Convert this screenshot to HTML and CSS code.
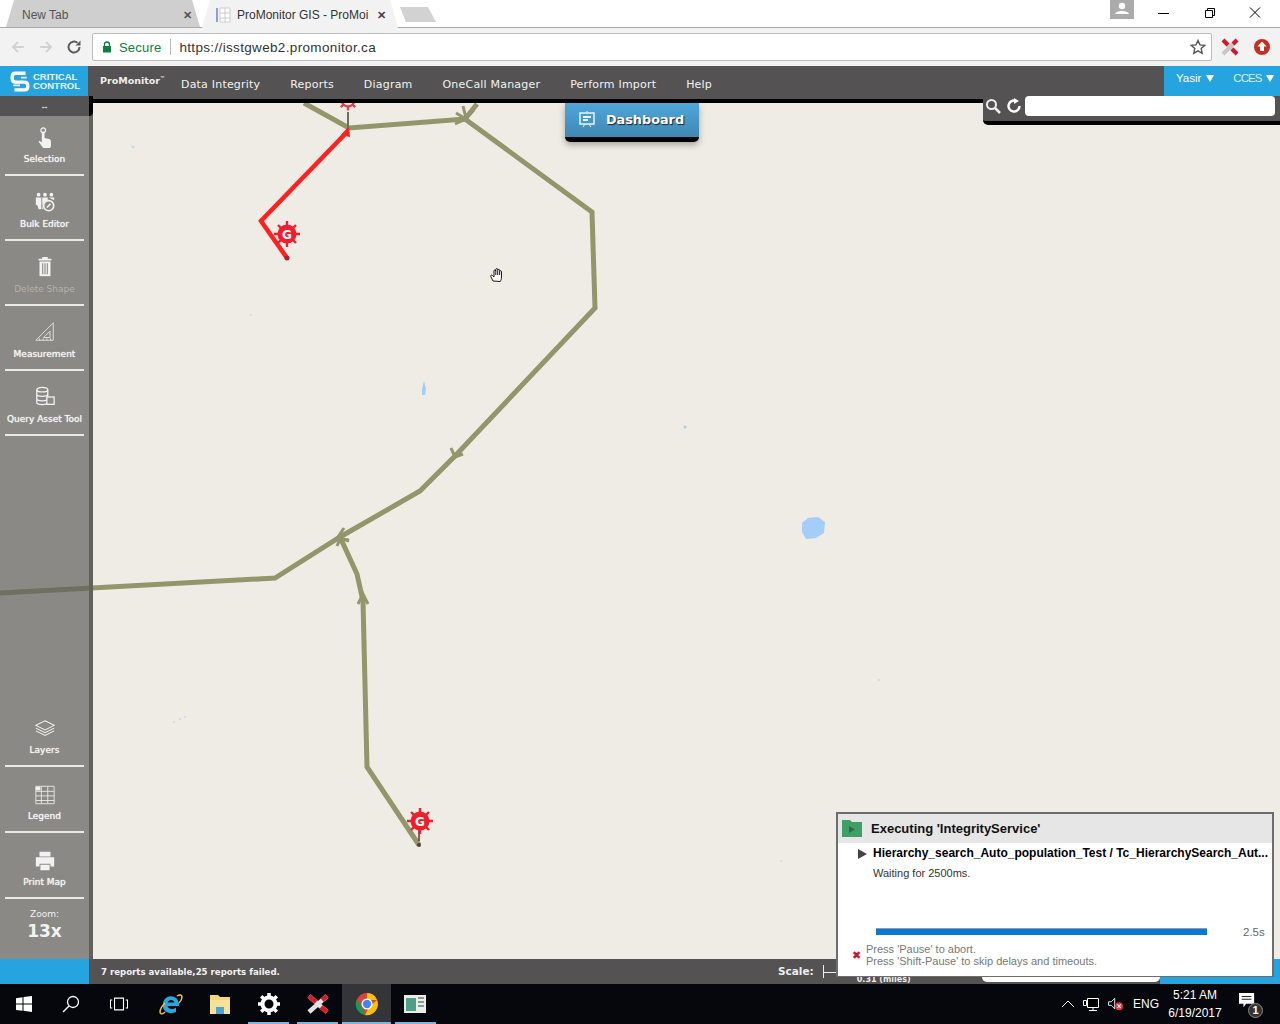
FILE: index.html
```html
<!DOCTYPE html>
<html lang="en">
<head>
<meta charset="utf-8">
<title>ProMonitor GIS</title>
<link rel="stylesheet" href="styles.css">
</head>
<body>
<div class="screen">
  <header class="tabstrip">
    <div class="tab tab-off"><span class="tab-title">New Tab</span><span class="tab-x">✕</span></div>
    <div class="tab tab-on">
      <svg class="favicon" viewBox="0 0 16 16"><rect x="0" y="1" width="2" height="14" fill="#7aa7d6"/><path d="M4 1h10v14H4zM4 6h10M4 11h10M9 1v14" fill="#fff" stroke="#ccc"/></svg>
      <span class="tab-title tab-title-on">ProMonitor GIS - ProMoi</span><span class="tab-x tab-x-on">✕</span>
    </div>
    <div class="tab-new"></div>
    <div class="strip-fill"></div>
    <div class="profile"><svg viewBox="0 0 24 19" class="profile-ico"><circle cx="12" cy="6" r="3.2" fill="#fff"/><path d="M5 14c1-4 13-4 14 0z" fill="#fff"/></svg></div>
    <div class="winbtns">
      <svg class="winbtn" viewBox="0 0 46 27"><path d="M18 13.500h11" stroke="#000" stroke-width="1"/></svg>
      <svg class="winbtn" viewBox="0 0 46 27"><path d="M19.500 10.500h7v7h-7zM21.500 10.500v-2h7v7h-2" fill="none" stroke="#000"/></svg>
      <svg class="winbtn" viewBox="0 0 46 27"><path d="M18 7.500l10 10M28 7.500l-10 10" stroke="#000" fill="none"/></svg>
    </div>
  </header>

  <nav class="toolbar">
    <svg class="nav-ico" viewBox="0 0 16 16"><path d="M14 8H3M8 3L3 8l5 5" fill="none" stroke="#d2d2d2" stroke-width="2"/></svg>
    <svg class="nav-ico" viewBox="0 0 16 16"><path d="M2 8h11M8 3l5 5-5 5" fill="none" stroke="#d2d2d2" stroke-width="2"/></svg>
    <svg class="nav-ico" viewBox="0 0 16 16"><path d="M13.500 8A5.500 5.500 0 1 1 11.500 3.800" fill="none" stroke="#5a5a5a" stroke-width="2"/><path d="M9.500 6.500h5v-5z" fill="#5a5a5a"/></svg>
    <div class="omnibox">
      <svg class="lock" viewBox="0 0 10 12"><path d="M2.500 5V3.500a2.500 2.500 0 0 1 5 0V5" fill="none" stroke="#0b8043" stroke-width="1.300"/><rect x="1" y="5" width="8" height="6.500" fill="#0b8043"/></svg>
      <span class="secure">Secure</span>
      <span class="omni-sep"></span>
      <span class="url">https://isstgweb2.promonitor.ca</span>
      <svg class="star" viewBox="0 0 16 16"><path d="M8 1.500l2 4.400 4.700.5-3.500 3.200 1 4.700L8 11.900l-4.200 2.400 1-4.700L1.300 6.400 6 5.900z" fill="none" stroke="#555" stroke-width="1.400"/></svg>
    </div>
    <svg class="ext-ico" viewBox="0 0 20 20"><path d="M3 3l14 14M17 3L3 17" stroke="#c7c7c7" stroke-width="4"/><path d="M3 3l5 5M12 12l5 5M17 3l-4 4" stroke="#d0172b" stroke-width="4"/></svg>
    <svg class="ext-ico" viewBox="0 0 20 20"><circle cx="10" cy="10" r="8" fill="#c62e22"/><path d="M10 4.500l4.500 5H12v4.500H8V9.500H5.500z" fill="#fff"/></svg>
  </nav>

  <div class="appbar">
    <div class="brand">
      <svg class="brand-ico" viewBox="0 0 18 18"><path d="M14 2H5Q2 2 2 5v2q0 3 3 3h8q3 0 3 3v1q0 3-3 3H4" fill="none" stroke="#fff" stroke-width="3"/><path d="M10 6h5M3 13h6" stroke="#fff" stroke-width="1.500"/></svg>
      <div class="brand-text"><span>CRITICAL</span><span>CONTROL</span></div>
    </div>
    <div class="app-logo">ProMonitor<sup>™</sup></div>
    <ul class="menu">
      <li>Data Integrity</li><li>Reports</li><li>Diagram</li><li>OneCall Manager</li><li>Perform Import</li><li>Help</li>
    </ul>
    <div class="userbox">
      <span class="user">Yasir<i class="caret"></i></span>
      <span class="user user-link"><span class="user-name">CCES</span><i class="caret"></i></span>
    </div>
  </div>

  <main class="map">
    <svg class="map-art" viewBox="0 0 1280 863">
      <g fill="#a4cdf8">
        <path d="M802 427l6-5 10-1 7 5-1 11-8 5-10 1-4-7z"/>
        <path d="M422 293l2-8 2 8-1 6-3 0z"/>
        <circle cx="133" cy="51" r="1.500" opacity=".6"/><circle cx="685" cy="331" r="1.500"/><circle cx="251" cy="219" r="1" opacity=".5"/>
        <circle cx="174" cy="626" r="1" opacity=".6"/><circle cx="180" cy="623" r="1" opacity=".6"/><circle cx="185" cy="621" r="1" opacity=".6"/><circle cx="879" cy="584" r="1" opacity=".5"/><circle cx="781" cy="765" r="1" opacity=".5"/>
      </g>
      <g fill="none" stroke="#92966a" stroke-width="5" stroke-linejoin="miter">
        <path d="M304 7L349 32 465 23 592 116 595 212 455 360 420 395 340 441 275 482 0 497"/>
        <path d="M465 23L477 8"/>
        <path d="M340 441L357 478 363 505 367 671 419 749"/>
      </g>
      <g fill="none" stroke="#92966a" stroke-width="3">
        <path d="M456 17L466 23 455 28"/>
        <path d="M463 10L466 22 474 14"/>
        <path d="M451 352L455 361 463 358"/>
        <path d="M344 432L338 441 349 445"/>
        <path d="M337 450L340 443 349 444"/>
        <path d="M358 508L363 498 368 508"/>
      </g>
      <g fill="none" stroke="#ff2020" stroke-width="4.500">
        <path d="M348 35L261 125 287 162" stroke-linejoin="miter"/>
      </g>
      <path d="M349 30l-8 9 9 2z" fill="#ff2020"/>
      <path d="M348 32V16" stroke="#6c7050" stroke-width="2"/>
      <circle cx="419" cy="749" r="2" fill="#444"/>
      <circle cx="287" cy="162" r="2.500" fill="#b02030"/>
      <path d="M419 745V728" stroke="#7c2030" stroke-width="1.500"/>
      <g transform="translate(348 4) scale(.8)">
        <path d="M-13 0H13M0-13V13M-9-9L9 9M9-9L-9 9" stroke="#d9414f" stroke-width="3"/>
        <circle r="8" fill="#efece5" stroke="#d9414f" stroke-width="3"/>
      </g>
      <g transform="translate(287 138)">
        <path d="M-13 0H13M0-13V13M-9-9L9 9M9-9L-9 9" stroke="#ef1d2d" stroke-width="2.400"/>
        <circle r="9.500" fill="#ef1d2d"/>
        <text class="gtext" y="4.500" text-anchor="middle">G</text>
      </g>
      <g transform="translate(420 725)">
        <path d="M-13 0H13M0-13V13M-9-9L9 9M9-9L-9 9" stroke="#ef1d2d" stroke-width="2.400"/>
        <circle r="9.500" fill="#ef1d2d"/>
        <text class="gtext" y="4.500" text-anchor="middle">G</text>
      </g>
      <g transform="translate(490 171)" stroke="#000" stroke-width=".9" fill="#fff">
        <path d="M3 14L.8 9.500c-.6-1.200.9-2 1.700-1L4 10V4c0-1.400 1.800-1.400 1.800 0V2.500c0-1.300 1.900-1.300 1.900 0v.8c0-1.200 1.900-1.200 1.900 0v1.200c.1-1.100 1.900-1 1.900.1V10c0 2-.6 3-1.200 4.500z"/>
        <path d="M5.800 4v4M7.700 3.300V8M9.600 4.500V8" fill="none"/>
      </g>
    </svg>

    <aside class="sidebar">
      <div class="side-top">↔</div>
      <div class="side-tools">
        <div class="tool">
          <svg class="tool-ico" viewBox="0 0 24 24"><circle cx="10" cy="3.500" r="2.500" fill="none" stroke="#f2f2f2" stroke-width="1.400"/><path d="M8.500 6h3v6l5 1c1 0 2 1 2 3v5l-1 2H10l-5-7 1-1 2.500 2z" fill="#f2f2f2"/></svg>
          <span class="tool-label">Selection</span>
        </div>
        <div class="tool">
          <svg class="tool-ico" viewBox="0 0 24 24"><g fill="#f2f2f2"><circle cx="5" cy="4" r="2"/><circle cx="12" cy="4" r="2"/><circle cx="19" cy="4" r="2"/><path d="M2 7h6v13H5l-1-4-2-1zM9 7h6v3a7 7 0 0 0-5 10H9zM16 7h6v3z"/></g><circle cx="16" cy="16" r="5.500" fill="none" stroke="#f2f2f2" stroke-width="1.800"/><path d="M14 18l4-4" stroke="#f2f2f2" stroke-width="1.800"/></svg>
          <span class="tool-label">Bulk Editor</span>
        </div>
        <div class="tool">
          <svg class="tool-ico" viewBox="0 0 24 24"><path d="M5 3h14v2H5zM9 1h6v2H9z" fill="#f2f2f2"/><path d="M6 6h12v16H6z" fill="#f2f2f2"/><path d="M9.500 8v12M12 8v12M14.500 8v12" stroke="#8b8b86" stroke-width="1.200"/></svg>
          <span class="tool-label tool-label-off">Delete Shape</span>
        </div>
        <div class="tool">
          <svg class="tool-ico" viewBox="0 0 24 24"><path d="M21 2v19H2zM17.500 11v7h-7z" fill="none" stroke="#e2e2de" stroke-width="1"/><path d="M6 21v-2M10 21v-2M14 21v-2M18 21v-2" stroke="#e2e2de"/></svg>
          <span class="tool-label">Measurement</span>
        </div>
        <div class="tool">
          <svg class="tool-ico" viewBox="0 0 24 24"><g fill="none" stroke="#f2f2f2" stroke-width="1.400"><ellipse cx="9" cy="4" rx="6" ry="2.500"/><path d="M3 4v14c0 3 12 3 12 0V4M3 9c0 3 12 3 12 0M3 14c0 3 12 3 12 0"/><rect x="14" y="12" width="8" height="8" fill="#8b8b86"/></g></svg>
          <span class="tool-label">Query Asset Tool</span>
        </div>
      </div>
      <div class="side-bottom">
        <div class="tool tool-b">
          <svg class="tool-ico" viewBox="0 0 24 24"><g fill="none" stroke="#f2f2f2" stroke-width="1.100"><path d="M12 3l10 5-10 5-10-5z"/><path d="M2 11l10 5 10-5M2 14l10 5 10-5"/></g></svg>
          <span class="tool-label">Layers</span>
        </div>
        <div class="tool tool-b">
          <svg class="tool-ico" viewBox="0 0 24 24"><path d="M2 2.500h20v19H2zM2 8h20M2 13h20M2 18h20M8 2.500v19M15 2.500v19" fill="none" stroke="#e8e8e4"/><rect x="2" y="3" width="5" height="4" fill="#f2f2f2"/></svg>
          <span class="tool-label">Legend</span>
        </div>
        <div class="tool tool-b">
          <svg class="tool-ico" viewBox="0 0 24 24"><path d="M6 2h12v5H6zM2 8h20v10h-4v-3H6v3H2zM7 16h10v6H7z" fill="#f2f2f2"/></svg>
          <span class="tool-label">Print Map</span>
        </div>
        <div class="zoom-box"><span class="zoom-label">Zoom:</span><span class="zoom-val">13x</span></div>
      </div>
    </aside>

    <div class="dashboard">
      <svg class="dash-ico" viewBox="0 0 18 18"><rect x="2" y="3" width="14" height="11" fill="none" stroke="#e8f3fa" stroke-width="1.500"/><path d="M5 7h8M5 10h5" stroke="#e8f3fa" stroke-width="2"/><path d="M5 17l2-3M13 17l-2-3M9 3V1" stroke="#e8f3fa"/></svg>
      <span>Dashboard</span>
    </div>

    <div class="searchbox">
      <svg class="search-ico" viewBox="0 0 16 16"><circle cx="6.500" cy="6.500" r="4.500" fill="none" stroke="#eee" stroke-width="2"/><path d="M10 10l5 5" stroke="#eee" stroke-width="2.500"/></svg>
      <svg class="search-ico" viewBox="0 0 16 16"><path d="M13.500 8A5.500 5.500 0 1 1 10 2.900" fill="none" stroke="#fff" stroke-width="2.400"/><path d="M8 0l5 3-5 3z" fill="#fff"/></svg>
      <div class="search-input"></div>
    </div>

    <section class="runner">
      <div class="runner-head">
        <svg class="runner-folder" viewBox="0 0 20 17"><path d="M0 0h8l2 2h10v15H0z" fill="#3fa066"/><path d="M7 6l6 3.500-6 3.500z" fill="#2c6c46"/></svg>
        <span>Executing 'IntegrityService'</span>
      </div>
      <div class="runner-test"><span class="runner-play"></span><span class="runner-name">Hierarchy_search_Auto_population_Test / Tc_HierarchySearch_Aut...</span></div>
      <div class="runner-wait">Waiting for 2500ms.</div>
      <div class="runner-progress"><div class="bar"><div class="bar-fill"></div></div><span class="bar-time">2.5s</span></div>
      <div class="runner-foot"><span class="runner-x">✖</span><div class="runner-hints"><div>Press 'Pause' to abort.</div><div>Press 'Shift-Pause' to skip delays and timeouts.</div></div></div>
    </section>
  </main>

  <footer class="statusbar">
    <div class="status-blue"></div>
    <div class="status-msg">7 reports available,25 reports failed.</div>
    <div class="status-scale">
      <span class="scale-label">Scale:</span>
      <div class="scale-rule"><span class="scale-tick"></span><span class="scale-text">0.31 (miles)</span></div>
      <div class="scale-pill"></div>
    </div>
    <div class="status-blue status-blue-r"></div>
  </footer>

  <footer class="taskbar">
    <svg class="task-ico start" viewBox="0 0 16 16"><path d="M0 2.200l6.500-.9v6.300H0zM7.500 1.100L16 0v7.600H7.500zM0 8.500h6.500v6.300L0 13.900zM7.500 8.500H16V16l-8.500-1.200z" fill="#fff"/></svg>
    <svg class="task-ico" viewBox="0 0 18 18"><circle cx="11" cy="7" r="5.500" fill="none" stroke="#fff" stroke-width="1.300"/><path d="M7 11l-6 6" stroke="#fff" stroke-width="1.500"/></svg>
    <svg class="task-ico" viewBox="0 0 20 16"><path d="M5 1.500h10v13H5zM2.500 3.500H.5v9h2M17.500 3.500h2v9h-2" fill="none" stroke="#fff" stroke-width="1.200"/></svg>
    <div class="task-slot">
      <svg class="task-big" viewBox="0 0 24 24"><path d="M4 13a8 8 0 0 1 16-1.500V14H8.500c.8 3.500 5.500 4 8.500 1.500V20c-6 3-14 0-13-7zM8.500 10.500h7c-.5-3.500-6-3.500-7 0z" fill="#2ba7e0"/><path d="M18 4c3-2 5-1 5 1 0 2-1 4-3 6M6 20c-3 3-5 2-5 0s2-6 5-9" fill="none" stroke="#f1c232" stroke-width="1.500"/></svg>
    </div>
    <div class="task-slot">
      <svg class="task-big" viewBox="0 0 24 24"><path d="M2 3h8l2 2h10v17H2z" fill="#f3d77b"/><path d="M2 8h20v14H2z" fill="#f6e199"/><path d="M8 15h8v7H8z" fill="#4ea2d8"/></svg>
    </div>
    <div class="task-slot task-active">
      <svg class="task-big" viewBox="0 0 24 24"><circle cx="12" cy="12" r="6.500" fill="none" stroke="#fff" stroke-width="4"/><path d="M12 1v4M12 19v4M1 12h4M19 12h4M4.200 4.200l2.800 2.800M17 17l2.800 2.800M19.800 4.200L17 7M7 17l-2.800 2.800" stroke="#fff" stroke-width="3.500"/></svg>
    </div>
    <div class="task-slot task-active">
      <svg class="task-big" viewBox="0 0 24 24"><path d="M3 4l18 16M21 4L3 20" stroke="#e2e2e2" stroke-width="4.500"/><path d="M3 4l7 6M15 15l6 5M21 4l-5 4" stroke="#d81c2a" stroke-width="4.500"/></svg>
    </div>
    <div class="task-slot task-focus">
      <svg class="task-big" viewBox="0 0 24 24"><circle cx="12" cy="12" r="11" fill="#da4437"/><path d="M12 1a11 11 0 0 1 10 7H12z" fill="#f4c20d"/><path d="M22 8a11 11 0 0 1-12 15l4-8z" fill="#f4c20d"/><path d="M1.800 7.500L7 16l3 7A11 11 0 0 1 1.800 7.500z" fill="#0f9d58"/><circle cx="12" cy="12" r="5.500" fill="#fff"/><circle cx="12" cy="12" r="4.200" fill="#4285f4"/></svg>
    </div>
    <div class="task-slot task-active">
      <svg class="task-big" viewBox="0 0 24 24"><path d="M1 3h22v18H1z" fill="#e8efe8"/><path d="M3 6h10v13H3z" fill="#4f9e86"/><path d="M15 6h6M15 10h6M15 14h6" stroke="#777" stroke-width="1.500"/></svg>
    </div>
    <div class="tray">
      <svg class="tray-ico" viewBox="0 0 14 10"><path d="M1 8l6-6 6 6" fill="none" stroke="#fff" stroke-width="1"/></svg>
      <svg class="tray-ico tray-net" viewBox="0 0 16 14"><path d="M4.500 1.500h11v9h-11zM10 10.500v3M6 13.500h8M.5 3.500h3v5h-3z" fill="#000" stroke="#fff"/></svg>
      <svg class="tray-ico tray-sound" viewBox="0 0 18 16"><path d="M.5 5.500h3l4-4v12l-4-4h-3z" fill="none" stroke="#fff"/><circle cx="12.500" cy="10.500" r="4.500" fill="#e8343c"/><path d="M10.500 8.500l4 4M14.500 8.500l-4 4" stroke="#fff" stroke-width="1.200"/></svg>
      <span class="tray-lang">ENG</span>
      <div class="clock"><span>5:21 AM</span><span>6/19/2017</span></div>
      <div class="notif">
        <svg class="tray-notif" viewBox="0 0 20 18"><path d="M1 0h17v12H9l-3 4v-4H1z" fill="#fff"/><path d="M4 4h11M4 7h11" stroke="#000"/></svg>
        <span class="notif-badge">1</span>
      </div>
    </div>
  </footer>
</div>
</body>
</html>
```

FILE: styles.css
```css
* { box-sizing: border-box; }
html, body { margin: 0; padding: 0; }
body { font-family: "Liberation Sans", Arial, sans-serif; background: #000; }
.screen { width: 1280px; height: 1024px; display: flex; flex-direction: column; overflow: hidden; }

.tabstrip { height: 28px; background: #fff; display: flex; align-items: stretch; padding: 0 2px 0 6px; gap: 2px; border-bottom: 1px solid #a8a8a8; flex: none; }
.tab { height: 28px; display: flex; align-items: center; position: relative; padding-top: 2px; }
.tab-off { width: 194px; background: #cfcfcf; padding-left: 16px; padding-right: 6px; clip-path: polygon(8px 0, 186px 0, 194px 27px, 0 27px); }
.tab-on { width: 196px; margin-left: 0; padding-left: 14px; padding-right: 10px; background: #f2f2f2; clip-path: polygon(8px 0, 188px 0, 196px 28px, 0 28px); }
.tab-title { font: 12px "Liberation Sans", sans-serif; color: #555; flex: 1; white-space: nowrap; }
.tab-title-on { color: #333; }
.tab-x { font-size: 11px; font-weight: 700; color: #555; width: 14px; text-align: center; }
.tab-x-on { color: #444; }
.favicon { width: 16px; height: 16px; margin-right: 5px; flex: none; }
.tab-new { width: 36px; height: 15px; margin: 7px 0 0 0; background: #d2d2d2; clip-path: polygon(0 0, 28px 0, 36px 100%, 6px 100%); }
.strip-fill { flex: 1; }
.profile { width: 24px; height: 19px; background: #ababab; margin-right: 4px; }
.profile-ico { display: block; width: 24px; height: 19px; }
.winbtns { display: flex; }
.winbtn { width: 46px; height: 27px; display: block; }

.toolbar { height: 38px; background: #f2f2f2; display: flex; align-items: center; padding: 0 8px 0 4px; flex: none; }
.nav-ico { width: 16px; height: 16px; margin: 0 6px; flex: none; }
.omnibox { flex: 1; height: 28px; background: #fff; border: 1px solid #bdbdbd; border-radius: 2px; display: flex; align-items: center; padding: 0 5px 0 9px; margin: 0 6px 0 4px; }
.lock { width: 10px; height: 12px; margin-right: 7px; flex: none; }
.secure { font-size: 13px; color: #0b8043; letter-spacing: .2px; }
.omni-sep { width: 1px; height: 16px; background: #bbb; margin: 0 8px 0 9px; }
.url { font-size: 13.500px; color: #333; flex: 1; letter-spacing: .34px; }
.star { width: 16px; height: 16px; }
.ext-ico { width: 20px; height: 20px; margin-left: 2px; flex: none; }
.ext-ico + .ext-ico { margin: 0 0 0 12px; }

.appbar { height: 37px; background: #545252; border-bottom: 4px solid #000; display: flex; align-items: flex-start; flex: none; position: relative; z-index: 3; }
.brand { width: 88px; height: 30px; background: #25a4df; display: flex; align-items: center; padding-left: 10px; gap: 3px; flex: none; }
.brand-ico { width: 20px; height: 22px; flex: none; }
.brand-text { display: flex; flex-direction: column; font: 700 9.500px/9px "Liberation Sans", sans-serif; color: #e8f5fc; }
.app-logo { font: 700 9.500px/1 "DejaVu Sans", sans-serif; color: #eee; width: 81px; padding: 10px 0 0 12px; flex: none; white-space: nowrap; }
.app-logo sup { font-size: 5px; }
.menu { list-style: none; margin: 0; padding: 12px 0 0 12px; display: flex; align-items: center; gap: 30px; flex: 1; font: 11px/14px "DejaVu Sans", sans-serif; color: #f2f2f2; letter-spacing: .2px; }
.userbox { width: 116px; height: 30px; background: #25a4df; display: flex; gap: 19px; padding: 6px 0 0 12px; font-size: 11.500px; color: #fff; flex: none; }
.user { white-space: nowrap; display: flex; align-items: flex-start; height: 14px; }
.user-link { color: #d6effa; }
.user-name { letter-spacing: -1px; }
.caret { width: 0; height: 0; margin: 3px 0 0 5px; border-left: 4.500px solid transparent; border-right: 4.500px solid transparent; border-top: 7px solid #fff; }

.map { flex: 1; position: relative; background: #efece5; min-height: 0; }
.map-art { position: absolute; left: 0; top: -7px; width: 1280px; height: 863px; }
.gtext { font: 700 12px "DejaVu Sans", sans-serif; fill: #fff; }

.sidebar { position: absolute; left: 0; top: -7px; bottom: 0; width: 93px; background: rgba(96,96,92,.7); border-right: 4px solid #62625d; display: flex; flex-direction: column; z-index: 4; }
.side-top { height: 20px; background: #545252; color: #eee; font-size: 9px; font-weight: 700; line-height: 20px; text-align: center; margin-right: -4px; border-right: 4px solid #000; border-radius: 0 0 4px 0; flex: none; }
.side-tools { display: flex; flex-direction: column; }
.side-bottom { margin-top: auto; display: flex; flex-direction: column; }
.tool { height: 65px; margin: 0 5px; border-bottom: 2px solid #e9e9e6; display: flex; flex-direction: column; align-items: center; padding-top: 15px; }
.tool-ico { width: 22px; height: 22px; margin-bottom: 5px; flex: none; }
.side-tools .tool:first-child { height: 60px; padding-top: 11px; }
.side-tools .tool:first-child .tool-ico { margin-bottom: 4px; }
.tool-b { height: 66px; padding-top: 17px; }
.tool-b .tool-ico { margin-bottom: 4px; }
.tool-label { font: 9px/12px "DejaVu Sans", sans-serif; color: #f4f4f0; white-space: nowrap; text-shadow: 0 0 1px #fff; }
.tool-label-off { color: #b2b2ad; text-shadow: none; }
.zoom-box { height: 60px; display: flex; flex-direction: column; align-items: center; padding-top: 9px; color: #f2f2f2; }
.zoom-label { font: 9px/12px "DejaVu Sans", sans-serif; }
.zoom-val { font: 700 17px/22px "DejaVu Sans", sans-serif; }

.dashboard { position: absolute; left: 565px; top: 0; width: 134px; height: 39px; background: linear-gradient(#4fa6d9, #3e88b4); border-bottom: 5px solid #000; border-radius: 0 0 5px 5px; box-shadow: 0 3px 6px rgba(0,0,0,.3); display: flex; align-items: center; padding: 0 0 2px 13px; gap: 10px; color: #fff; font: 700 12.800px "DejaVu Sans", sans-serif; text-shadow: 1px 1px 1px #123; }
.dash-ico { width: 18px; height: 18px; flex: none; }

.searchbox { position: absolute; right: 0; top: -7px; width: 297px; height: 29px; background: #545252; border-bottom: 4px solid #000; border-radius: 0 0 0 5px; display: flex; align-items: flex-start; padding: 0 5px 0 2px; gap: 5px; z-index: 4; }
.search-ico { width: 16px; height: 16px; margin-top: 2px; flex: none; }
.search-input { flex: 1; height: 20px; background: #fff; border-radius: 4px; margin-left: -2px; }

.runner { position: absolute; left: 836px; bottom: -18px; width: 438px; height: 165px; background: #fff; border: 2px solid #6d6d6d; border-bottom-width: 1px; font-family: "Liberation Sans", sans-serif; z-index: 5; }
.runner-head { height: 29px; background: #e6e6e6; display: flex; align-items: center; padding-left: 4px; gap: 9px; font-size: 13px; font-weight: 700; color: #111; }
.runner-folder { width: 20px; height: 17px; flex: none; }
.runner-test { display: flex; align-items: center; padding: 2px 0 0 20px; gap: 6px; height: 18px; }
.runner-play { width: 0; height: 0; border-left: 9px solid #444; border-top: 5px solid transparent; border-bottom: 5px solid transparent; flex: none; margin-top: 2px; }
.runner-name { font-size: 12px; font-weight: 700; color: #000; white-space: nowrap; }
.runner-wait { font-size: 11px; line-height: 14px; color: #333; padding: 5px 0 0 35px; }
.runner-progress { display: flex; align-items: center; padding: 46px 0 0 38px; }
.bar { width: 331px; height: 8px; border-top: 1px solid #999; background: #fff; }
.bar-fill { height: 6px; background: #0a78d7; }
.bar-time { font-size: 11.500px; color: #666; margin-left: 36px; }
.runner-foot { display: flex; align-items: center; padding: 5px 0 0 14px; gap: 5px; }
.runner-x { color: #c41830; font-size: 11px; }
.runner-hints { font-size: 11px; line-height: 12px; color: #777; }

.statusbar { height: 25px; background: #545252; display: flex; align-items: center; flex: none; }
.status-blue { width: 89px; height: 25px; background: #25a4df; flex: none; }
.status-msg { margin-left: 12px; width: 677px; font: 700 8.600px "DejaVu Sans", sans-serif; color: #f2f2f2; white-space: nowrap; }
.status-scale { display: flex; align-items: flex-start; height: 25px; flex: 1; position: relative; color: #eee; }
.scale-label { font: 700 10.500px/25px "DejaVu Sans", sans-serif; }
.scale-rule { margin-left: 9px; width: 150px; height: 13px; margin-top: 6px; border-left: 1px solid #eee; position: relative; }
.scale-tick { display: block; width: 14px; border-top: 1px solid #eee; margin-top: 7px; }
.scale-text { position: absolute; left: 33px; top: 10px; font: 700 8px/10px "DejaVu Sans", sans-serif; white-space: nowrap; }
.scale-pill { position: absolute; left: 204px; top: 18px; width: 178px; height: 5px; background: #fff; border-radius: 0 0 6px 6px; }
.status-blue-r { width: 120px; }

.taskbar { height: 40px; background: #05070c; display: flex; align-items: center; flex: none; position: relative; z-index: 6; }
.task-ico { width: 18px; height: 18px; margin-left: 15px; flex: none; }
.task-ico.start { width: 16px; height: 16px; margin-left: 16px; }
.task-ico + .task-ico { margin-left: 30px; }
.task-slot { width: 48.800px; height: 40px; display: flex; align-items: center; justify-content: center; flex: none; }
.task-slot:first-of-type { margin-left: 19px; }
.task-active { background: linear-gradient(#7ab6de, #7ab6de) center bottom / 41px 2px no-repeat; }
.task-focus { background: linear-gradient(#7ab6de, #7ab6de) center bottom / 100% 2px no-repeat, #333538; }
.task-big { width: 24px; height: 24px; }
.tray { margin-left: auto; display: flex; align-items: center; color: #fff; gap: 8px; padding-right: 20px; }
.tray-ico { width: 14px; height: 12px; flex: none; }
.tray-net { width: 16px; height: 14px; }
.tray-sound { width: 18px; height: 14px; }
.tray-lang { font-size: 12px; width: 24px; white-space: nowrap; }
.clock { display: flex; flex-direction: column; align-items: center; font-size: 12px; line-height: 18px; width: 60px; }
.notif { position: relative; width: 22px; height: 22px; margin-left: 5px; }
.tray-notif { width: 18px; height: 16px; display: block; }
.notif-badge { position: absolute; right: -3px; bottom: -3px; width: 15px; height: 15px; border-radius: 50%; background: #333; border: 1px solid #888; font-size: 11px; font-weight: 700; text-align: center; line-height: 13px; }
```
